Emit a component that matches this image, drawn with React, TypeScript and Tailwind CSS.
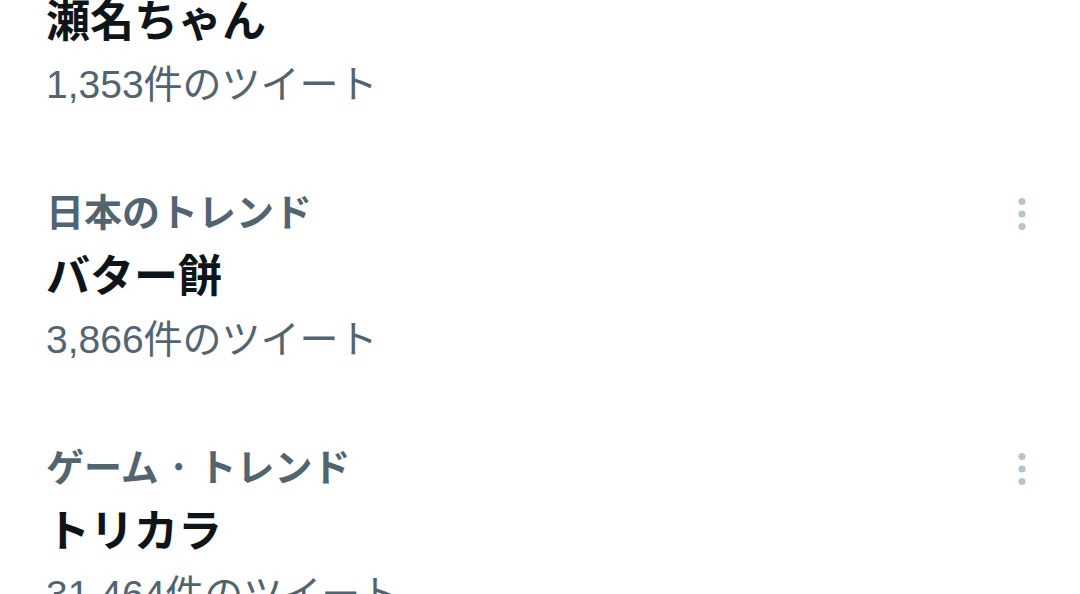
import React from 'react';

type Trend = {
    category: string;
    name: string;
    count: string;
};

const trends: Trend[] = [
    { category: '日本のトレンド', name: '瀬名ちゃん', count: '1,353件のツイート' },
    { category: '日本のトレンド', name: 'バター餅', count: '3,866件のツイート' },
    { category: 'ゲーム · トレンド', name: 'トリカラ', count: '31,464件のツイート' },
];

const MoreDots: React.FC = () => (
    <svg width="10" height="36" viewBox="0 0 10 36" className="block mt-[7px]">
        <circle cx="5" cy="5.5" r="3.6" fill="#b6c4cc" />
        <circle cx="5" cy="18" r="3.6" fill="#b6c4cc" />
        <circle cx="5" cy="30.5" r="3.6" fill="#b6c4cc" />
    </svg>
);

const App: React.FC = () => {
    return (
        <div
            className="w-[1080px] h-[594px] overflow-hidden bg-white"
            style={{ fontFamily: '"Noto Sans CJK JP", "Noto Sans", sans-serif' }}
        >
            <div className="-mt-[76px] pl-[46px] pr-[53px] flex flex-col">
                {trends.map((t, i) => (
                    <div key={i} className="flex flex-col pb-[65px]">
                        <div className="h-[62px] flex items-center justify-between">
                            <span className="text-[38px] font-bold text-[#536471] leading-none">{t.category}</span>
                            <MoreDots />
                        </div>
                        <div className="h-[64px] flex items-center">
                            <span className="text-[44px] font-bold text-[#0f1419] leading-none">{t.name}</span>
                        </div>
                        <div className="h-[64px] flex items-center pt-[4px]">
                            <span
                                className="text-[39px] text-[#536471] leading-none"
                                style={{ fontFamily: '"Liberation Sans", "Noto Sans CJK JP", sans-serif' }}
                            >
                                {t.count}
                            </span>
                        </div>
                    </div>
                ))}
            </div>
        </div>
    );
};

export default App;
